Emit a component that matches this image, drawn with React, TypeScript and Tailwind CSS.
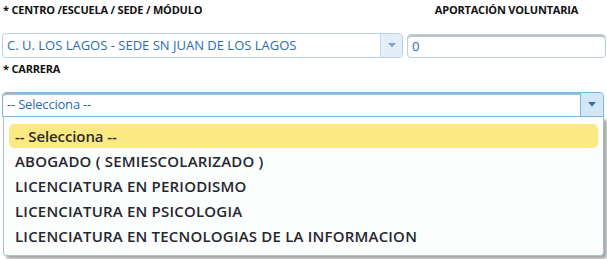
import React from "react";

const font = { fontFamily: '"Open Sans", "Noto Sans", sans-serif' };

function Arrow({ color }: { color: string }) {
  return (
    <svg width="8" height="5" viewBox="0 0 8 5">
      <path d="M0 0 H8 L4 4.5 Z" fill={color} />
    </svg>
  );
}

export default function App() {
  const items = [
    "ABOGADO ( SEMIESCOLARIZADO )",
    "LICENCIATURA EN PERIODISMO",
    "LICENCIATURA EN PSICOLOGIA",
    "LICENCIATURA EN TECNOLOGIAS DE LA INFORMACION",
  ];
  return (
    <div className="w-[607px] h-[259px] bg-white overflow-hidden relative" style={font}>
      <div className="flex pl-[3px] pt-[3px] h-[33px]">
        <div className="w-[403px] text-[11px] font-bold text-[#111] leading-[14px] tracking-[-0.2px]">
          * CENTRO /ESCUELA / SEDE / MÓDULO
        </div>
        <div className="flex-1 text-center text-[11px] font-bold text-[#111] leading-[14px] tracking-[-0.2px]">
          APORTACIÓN VOLUNTARIA
        </div>
      </div>
      <div className="flex pl-[2px] h-[25px]">
        <div className="w-[401px] h-[25px] flex border border-[#b7d1e8] rounded-[4px] bg-white overflow-hidden">
          <div className="flex-1 pl-[4px] text-[13px] leading-[23px] text-[#2a6cb6]">
            C. U. LOS LAGOS - SEDE SN JUAN DE LOS LAGOS
          </div>
          <div className="w-[22px] flex items-center justify-center border-l border-[#c5dbec] bg-[#e4eef8]">
            <Arrow color="#7ea6cf" />
          </div>
        </div>
        <div className="ml-[4px] w-[199px] h-[24px] mt-[1px] border border-[#b9cfe2] rounded-[4px] shadow-[inset_0_2px_1px_rgba(0,0,0,0.25)] pl-[4px] text-[13px] leading-[22px] text-[#2a6cb6]">
          0
        </div>
      </div>
      <div className="pl-[3px] pt-[4px] h-[34px] text-[11px] font-bold text-[#111] leading-[14px] tracking-[-0.2px]">
        * CARRERA
      </div>
      <div className="pl-[2px] relative">
        <div className="w-[602px] h-[25px] flex border border-[#79b7e7] rounded-t-[4px] bg-white shadow-[inset_0_2px_1px_rgba(0,0,0,0.3)]">
          <div className="flex-1 pl-[4px] text-[13px] leading-[23px] text-[#2a6cb6] tracking-[-0.2px]">
            -- Selecciona --
          </div>
          <div className="w-[23px] flex items-center justify-center border-l border-[#79b7e7] bg-[#d3e6f6] rounded-tr-[3px]">
            <Arrow color="#2e6eae" />
          </div>
        </div>
        <div className="ml-[1px] w-[601px] h-[139px] bg-[#fcfefe] border border-t-0 border-[#a9bfd6] rounded-b-[4px] shadow-[3px_3px_3px_rgba(0,0,0,0.35)] pt-[7px] px-[5px]">
          <div className="h-[24px] mb-[1px] rounded-[5px] bg-[#fbe983] pl-[6px] text-[15px] font-semibold text-[#2a2a2a] leading-[24px] tracking-[-0.1px]">
            -- Selecciona --
          </div>
          {items.map((t) => (
            <div key={t} className="h-[25px] pl-[6px] text-[15px] font-semibold text-[#26262e] leading-[25px] tracking-[0.2px]">
              {t}
            </div>
          ))}
        </div>
      </div>
    </div>
  );
}
